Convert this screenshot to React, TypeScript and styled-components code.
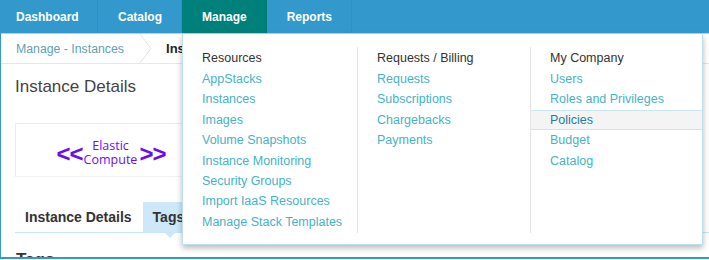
import React from "react";
import styled, { createGlobalStyle } from "styled-components";

const GlobalStyle = createGlobalStyle`
  html, body {
    margin: 0;
    padding: 0;
    background: #ffffff;
    font-family: "Liberation Sans", Arial, sans-serif;
  }
`;

const navItems = ["Dashboard", "Catalog", "Manage", "Reports"];

const menuColumns = [
  {
    title: "Resources",
    items: [
      "AppStacks",
      "Instances",
      "Images",
      "Volume Snapshots",
      "Instance Monitoring",
      "Security Groups",
      "Import IaaS Resources",
      "Manage Stack Templates",
    ],
  },
  {
    title: "Requests / Billing",
    items: ["Requests", "Subscriptions", "Chargebacks", "Payments"],
  },
  {
    title: "My Company",
    items: ["Users", "Roles and Privileges", "Policies", "Budget", "Catalog"],
  },
];

const App = () => {
  return (
    <Frame>
      <GlobalStyle />
      <NavBar>
        {navItems.map((item, i) => (
          <NavItem key={item} $active={item === "Manage"} $first={i === 0}>
            {item}
          </NavItem>
        ))}
      </NavBar>

      <Breadcrumb>
        <CrumbLink>Manage - Instances</CrumbLink>
        <Chevron width="14" height="29" viewBox="0 0 14 29">
          <polyline points="1,0 12,14.5 1,29" fill="none" stroke="#e2e2e2" strokeWidth="1" />
        </Chevron>
        <CrumbCurrent>Instance Details</CrumbCurrent>
      </Breadcrumb>

      <Content>
        <PageTitle>Instance Details</PageTitle>
        <LogoCard>
          <Logo>
            <Angle>&lt;&lt;</Angle>
            <LogoWords>
              <span>Elastic</span>
              <span>Compute</span>
            </LogoWords>
            <Angle>&gt;&gt;</Angle>
          </Logo>
        </LogoCard>

        <Tabs>
          <Tab>Instance Details</Tab>
          <Tab $active>Tags</Tab>
        </Tabs>

        <SectionTitle>Tags</SectionTitle>
      </Content>

      <Dropdown>
        {menuColumns.map((col, i) => (
          <MenuColumn key={col.title} $divider={i > 0}>
            <MenuHeader>{col.title}</MenuHeader>
            {col.items.map((item) => (
              <MenuItem key={item} $hover={item === "Policies"}>
                {item}
              </MenuItem>
            ))}
          </MenuColumn>
        ))}
      </Dropdown>
    </Frame>
  );
};

export default App;

const Frame = styled.div`
  position: relative;
  width: 709px;
  height: 257px;
  overflow: hidden;
  border-bottom: 2px solid #3399cc;
  box-sizing: content-box;
  &::before {
    content: "";
    position: absolute;
    left: 0;
    top: 0;
    bottom: 0;
    width: 1px;
    background: #3399cc;
    z-index: 1;
  }
`;

const NavBar = styled.div`
  display: flex;
  height: 33px;
  background: #3399cc;
  border-bottom: 1px solid #a9d6ee;
`;

const NavItem = styled.div<{ $active?: boolean; $first?: boolean }>`
  display: flex;
  align-items: center;
  height: 33px;
  padding: 0 19px 0 ${(p) => (p.$first ? "16px" : "20px")};
  width: ${(p) => (p.$first ? "98px" : "auto")};
  box-sizing: border-box;
  font-size: 12px;
  font-weight: bold;
  color: #ffffff;
  background: ${(p) => (p.$active ? "#00807a" : "transparent")};
  border-right: 1px solid rgba(0, 0, 0, 0.06);
`;

const Breadcrumb = styled.div`
  display: flex;
  align-items: center;
  height: 29px;
  padding-left: 16px;
  border-bottom: 1px solid #e6e6e6;
`;

const CrumbLink = styled.span`
  font-size: 12.3px;
  color: #5f9fb8;
`;

const Chevron = styled.svg`
  display: block;
  margin: 0 13px 0 15px;
`;

const CrumbCurrent = styled.span`
  font-size: 13px;
  font-weight: bold;
  color: #222222;
`;

const Content = styled.div`
  display: flex;
  flex-direction: column;
  padding-left: 15px;
`;

const PageTitle = styled.h1`
  margin: 13px 0 0 0;
  font-size: 17px;
  font-weight: normal;
  line-height: 20px;
  color: #444444;
`;

const LogoCard = styled.div`
  display: flex;
  align-items: center;
  justify-content: center;
  width: 190px;
  height: 52px;
  margin-top: 26px;
  border: 1px solid #ebebeb;
  border-bottom-color: #f2f2f2;
`;

const Logo = styled.div`
  display: flex;
  align-items: center;
  color: #6a0cf5;
  margin-top: 5px;
`;

const Angle = styled.span`
  font-family: "Liberation Sans", Arial, sans-serif;
  font-weight: bold;
  font-size: 24px;
  line-height: 24px;
  letter-spacing: -1px;
  margin-top: 3px;
`;

const LogoWords = styled.span`
  display: flex;
  flex-direction: column;
  align-items: center;
  margin: 0 2px 0 1px;
  font-family: "Open Sans", sans-serif;
  font-size: 12.5px;
  line-height: 14px;
`;

const Tabs = styled.div`
  display: flex;
  height: 30px;
  margin-top: 25px;
  border-bottom: 1px solid #c9e6f5;
`;

const Tab = styled.div<{ $active?: boolean }>`
  position: relative;
  display: flex;
  align-items: center;
  padding: 0 11px 0 10px;
  font-size: 14px;
  font-weight: bold;
  color: #333333;
  background: ${(p) => (p.$active ? "#cde9f9" : "transparent")};
  &::after {
    content: "";
    display: ${(p) => (p.$active ? "block" : "none")};
    position: absolute;
    left: 22px;
    bottom: -6px;
    border-left: 5px solid transparent;
    border-right: 5px solid transparent;
    border-top: 5px solid #cde9f9;
  }
`;

const SectionTitle = styled.h2`
  margin: 17px 0 0 1px;
  font-size: 17px;
  font-weight: bold;
  color: #333333;
  line-height: 20px;
`;

const Dropdown = styled.div`
  position: absolute;
  top: 34px;
  left: 182px;
  width: 521px;
  height: 211px;
  box-sizing: border-box;
  display: grid;
  grid-template-columns: 174px 173px 1fr;
  align-items: start;
  padding: 13px 0 12px 0;
  background: #ffffff;
  border: 1px solid #bfe1ef;
  border-top: none;
  box-shadow: 0 3px 6px rgba(0, 0, 0, 0.28);
  z-index: 2;
`;

const MenuColumn = styled.div<{ $divider?: boolean }>`
  display: flex;
  flex-direction: column;
  height: 186px;
  border-left: ${(p) => (p.$divider ? "1px solid #e4e4e4" : "none")};
`;

const MenuHeader = styled.div`
  height: 22px;
  line-height: 22px;
  padding-left: 19px;
  font-size: 12.5px;
  color: #333333;
`;

const MenuItem = styled.div<{ $hover?: boolean }>`
  height: 20.4px;
  box-sizing: border-box;
  padding-left: 19px;
  font-size: 12.5px;
  color: ${(p) => (p.$hover ? "#1f7ea6" : "#45b3c5")};
  background: ${(p) => (p.$hover ? "#f4f4f4" : "transparent")};
  border-top: ${(p) => (p.$hover ? "1px solid #c6e6f2" : "none")};
  border-bottom: ${(p) => (p.$hover ? "1px solid #c6e6f2" : "none")};
  line-height: ${(p) => (p.$hover ? "18.4px" : "20.4px")};
`;
